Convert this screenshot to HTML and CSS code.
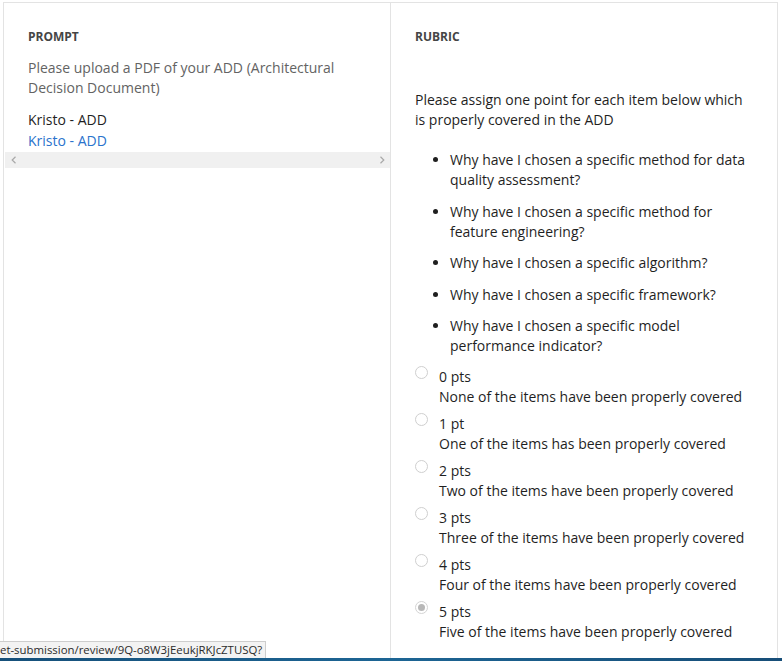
FILE: index.html
```html
<!DOCTYPE html>
<html lang="en">
<head>
<meta charset="utf-8">
<title>Review</title>
<link rel="stylesheet" href="styles.css">
</head>
<body>
<div class="frame">
  <section class="col col-prompt">
    <h2 class="heading">PROMPT</h2>
    <p class="prompt-text">Please upload a PDF of your ADD (Architectural Decision Document)</p>
    <div class="submission">
      <div class="sub-title">Kristo - ADD</div>
      <a class="sub-link" href="#">Kristo - ADD</a>
    </div>
    <div class="hscroll">
      <svg class="arrow" width="6" height="8" viewBox="0 0 6 8"><path d="M4.5 0.8 L1.2 4 L4.5 7.2" fill="none" stroke="#a8a8a8" stroke-width="1.2"/></svg>
      <svg class="arrow" width="6" height="8" viewBox="0 0 6 8"><path d="M1.5 0.8 L4.8 4 L1.5 7.2" fill="none" stroke="#a8a8a8" stroke-width="1.2"/></svg>
    </div>
  </section>
  <section class="col col-rubric">
    <h2 class="heading">RUBRIC</h2>
    <p class="rubric-intro">Please assign one point for each item below which is properly covered in the ADD</p>
    <ul class="items">
      <li>Why have I chosen a specific method for data quality assessment?</li>
      <li>Why have I chosen a specific method for feature engineering?</li>
      <li>Why have I chosen a specific algorithm?</li>
      <li>Why have I chosen a specific framework?</li>
      <li>Why have I chosen a specific model performance indicator?</li>
    </ul>
    <div class="options">
      <div class="option"><span class="radio"></span><div class="opt-body"><div>0 pts</div><div>None of the items have been properly covered</div></div></div>
      <div class="option"><span class="radio"></span><div class="opt-body"><div>1 pt</div><div>One of the items has been properly covered</div></div></div>
      <div class="option"><span class="radio"></span><div class="opt-body"><div>2 pts</div><div>Two of the items have been properly covered</div></div></div>
      <div class="option"><span class="radio"></span><div class="opt-body"><div>3 pts</div><div>Three of the items have been properly covered</div></div></div>
      <div class="option"><span class="radio"></span><div class="opt-body"><div>4 pts</div><div>Four of the items have been properly covered</div></div></div>
      <div class="option"><span class="radio checked"></span><div class="opt-body"><div>5 pts</div><div>Five of the items have been properly covered</div></div></div>
    </div>
  </section>
</div>
<div class="status-url">et-submission/review/9Q-o8W3jEeukjRKJcZTUSQ?</div>
<div class="taskbar-edge"></div>
</body>
</html>
```
FILE: styles.css
```css
html, body {
  margin: 0;
  padding: 0;
  background: #ffffff;
  overflow: hidden;
}
body {
  padding: 2px 0 0 3px;
  font-family: "Open Sans", "Noto Sans", sans-serif;
  font-size: 14px;
  line-height: 20px;
  color: #1f1f1f;
}
.frame {
  display: flex;
  width: 773px;
  min-height: 700px;
  border: 1px solid #e3e3e3;
}
.col {
  box-sizing: border-box;
  padding: 26px 24px 0 24px;
}
.col-prompt {
  width: 386px;
  flex: none;
}
.col-rubric {
  flex: 1;
  border-left: 1px solid #e3e3e3;
}
.heading {
  margin: 0;
  font-size: 12px;
  line-height: 16px;
  font-weight: 700;
  color: #454545;
}
.prompt-text {
  margin: 13px 0 0 0;
  color: #636363;
}
.submission {
  margin-top: 12px;
}
.sub-title {
  color: #1f1f1f;
}
.sub-link {
  display: block;
  margin-top: 1px;
  color: #2a73cc;
  text-decoration: none;
}
.hscroll {
  margin: 1px -24px 0 -23px;
  height: 16px;
  background: #f0f0f0;
  display: flex;
  justify-content: space-between;
  align-items: center;
  padding: 0 5px 0 6px;
}
.arrow {
  display: block;
}
.rubric-intro {
  margin: 45px 0 0 0;
  color: #1f1f1f;
}
.items {
  margin: 20px 0 0 0;
  padding-left: 35px;
}
.items li {
  margin-bottom: 11.5px;
}
.items li:last-child {
  margin-bottom: 0;
}
.options {
  margin-top: 11px;
  display: flex;
  flex-direction: column;
  gap: 7px;
}
.option {
  display: flex;
  gap: 11px;
  align-items: flex-start;
}
.radio {
  flex: none;
  box-sizing: border-box;
  width: 13px;
  height: 13px;
  margin-top: -1px;
  border: 1px solid #cfcfcf;
  border-radius: 50%;
  background: #fff;
  position: relative;
}
.radio.checked {
  border-color: #d4d4d4;
}
.radio.checked::after {
  content: "";
  position: absolute;
  left: 2px;
  top: 2px;
  width: 7px;
  height: 7px;
  border-radius: 50%;
  background: #b8b8b8;
}
.status-url {
  position: fixed;
  left: 0;
  bottom: 3px;
  height: 17px;
  box-sizing: border-box;
  padding: 0 3px 0 0;
  background: #f3f3f3;
  border-top: 1px solid #cdcdcd;
  border-right: 1px solid #cdcdcd;
  font-family: "Open Sans", "Noto Sans", sans-serif;
  font-size: 11.4px;
  line-height: 16px;
  color: #2b2b2b;
  white-space: nowrap;
}
.taskbar-edge {
  position: fixed;
  left: 0;
  right: 0;
  bottom: 0;
  height: 3px;
  background: linear-gradient(90deg, #16507a, #1d6594 50%, #174e78);
}
```
